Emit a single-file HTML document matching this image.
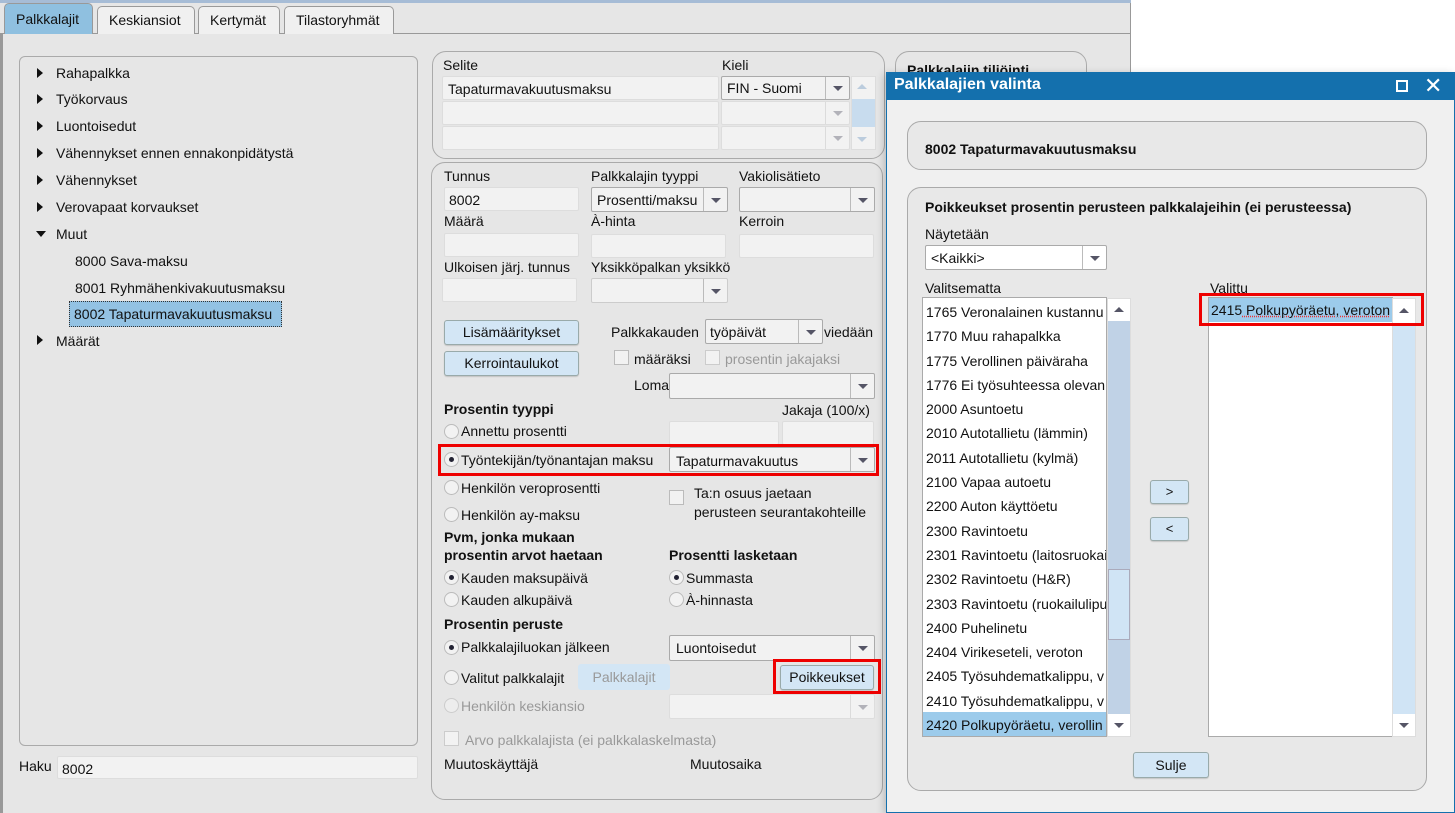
<!DOCTYPE html>
<html><head><meta charset="utf-8"><style>
*{box-sizing:border-box;margin:0;padding:0}
body{width:1455px;height:813px;overflow:hidden;background:#fff;font-family:"Liberation Sans",Arial,sans-serif;font-size:14px;color:#111;position:relative}
.a{position:absolute}
.t{position:absolute;white-space:nowrap}
.b{font-weight:bold}
.inp{position:absolute;background:#f2f2f2;border:1px solid #ddd;border-radius:2px}
.sel{position:absolute;background:#f2f2f2;border:1px solid #aaa;border-radius:2px}
.sel .ar{position:absolute;right:0;top:0;bottom:0;width:24px;border-left:1px solid #bbb}
.ar::after{content:"";position:absolute;left:7px;top:50%;margin-top:-2px;border-left:5px solid transparent;border-right:5px solid transparent;border-top:5px solid #556}
.btn{position:absolute;background:#d3e6f5;border:1px solid #9aa;border-radius:3px;text-align:center;box-shadow:0 1px 1px rgba(0,0,0,.15)}
.rad{position:absolute;width:15px;height:15px;border-radius:50%;background:#f2f2f2;border:1px solid #bbb}
.rad.on::after{content:"";position:absolute;left:4px;top:4px;width:5px;height:5px;border-radius:50%;background:#223}
.chk{position:absolute;width:15px;height:15px;background:#f2f2f2;border:1px solid #bbb}
.tri{position:absolute;border-top:5px solid transparent;border-bottom:5px solid transparent;border-left:6px solid #111}
.trd{position:absolute;border-left:5px solid transparent;border-right:5px solid transparent;border-top:6px solid #111}
.grp{position:absolute;border:1px solid #aaa;border-radius:14px}
.red{position:absolute;border:3px solid #e00}
.gray{color:#999}
</style></head><body>
<div class="a" style="left:0;top:0;width:1131px;height:813px;background:#e6e6e6;border-right:1px solid #999"></div>
<div class="a" style="left:0;top:0;width:1131px;height:3px;background:#a6bcd6"></div>
<div class="a" style="left:0;top:33px;width:1131px;height:1px;background:#999"></div>
<div class="a" style="left:0;top:33px;width:3px;height:780px;background:#999"></div>
<div class="a" style="left:4px;top:3px;width:89px;height:31px;background:#8fc0e0;border:1px solid #999;border-bottom:none;border-radius:5px 5px 0 0"></div>
<div class="t" style="left:16px;top:11px">Palkkalajit</div>
<div class="a" style="left:97px;top:6px;width:98px;height:28px;background:#f0f0f0;border:1px solid #999;border-bottom:none;border-radius:5px 5px 0 0"></div>
<div class="t" style="left:109px;top:12px">Keskiansiot</div>
<div class="a" style="left:198px;top:6px;width:82px;height:28px;background:#f0f0f0;border:1px solid #999;border-bottom:none;border-radius:5px 5px 0 0"></div>
<div class="t" style="left:210px;top:12px">Kertymät</div>
<div class="a" style="left:284px;top:6px;width:110px;height:28px;background:#f0f0f0;border:1px solid #999;border-bottom:none;border-radius:5px 5px 0 0"></div>
<div class="t" style="left:296px;top:12px">Tilastoryhmät</div>
<div class="grp" style="left:19px;top:56px;width:399px;height:690px;border-radius:6px"></div>
<div class="tri" style="left:37px;top:68px"></div><div class="t" style="left:56px;top:65px">Rahapalkka</div>
<div class="tri" style="left:37px;top:94px"></div><div class="t" style="left:56px;top:91px">Työkorvaus</div>
<div class="tri" style="left:37px;top:121px"></div><div class="t" style="left:56px;top:118px">Luontoisedut</div>
<div class="tri" style="left:37px;top:148px"></div><div class="t" style="left:56px;top:145px">Vähennykset ennen ennakonpidätystä</div>
<div class="tri" style="left:37px;top:175px"></div><div class="t" style="left:56px;top:172px">Vähennykset</div>
<div class="tri" style="left:37px;top:202px"></div><div class="t" style="left:56px;top:199px">Verovapaat korvaukset</div>
<div class="trd" style="left:36px;top:231px"></div><div class="t" style="left:56px;top:226px">Muut</div>
<div class="t" style="left:75px;top:253px">8000 Sava-maksu</div>
<div class="t" style="left:75px;top:280px">8001 Ryhmähenkivakuutusmaksu</div>
<div class="a" style="left:69px;top:301px;width:213px;height:26px;background:#93c2e3;border:1px dotted #333"></div>
<div class="t" style="left:74px;top:306px">8002 Tapaturmavakuutusmaksu</div>
<div class="tri" style="left:37px;top:335px"></div><div class="t" style="left:56px;top:333px">Määrät</div>
<div class="t" style="left:19px;top:758px">Haku</div>
<div class="inp" style="left:57px;top:756px;width:361px;height:23px"></div>
<div class="t" style="left:62px;top:761px">8002</div>
<div class="grp" style="left:432px;top:51px;width:453px;height:108px"></div>
<div class="t" style="left:443px;top:57px">Selite</div>
<div class="t" style="left:722px;top:57px">Kieli</div>
<div class="inp" style="left:442px;top:76px;width:277px;height:24px"></div>
<div class="t" style="left:448px;top:81px">Tapaturmavakuutusmaksu</div>
<div class="inp" style="left:442px;top:101px;width:277px;height:24px"></div>
<div class="inp" style="left:442px;top:126px;width:277px;height:24px"></div>
<div class="sel" style="left:721px;top:76px;width:129px;height:24px"><div class="ar"></div></div>
<div class="t" style="left:727px;top:80px">FIN - Suomi</div>
<div class="sel" style="left:721px;top:101px;width:129px;height:24px;border-color:#ddd"><div class="ar" style="opacity:.4"></div></div>
<div class="sel" style="left:721px;top:126px;width:129px;height:24px;border-color:#ddd"><div class="ar" style="opacity:.4"></div></div>
<div class="a" style="left:851px;top:76px;width:25px;height:74px;background:#f2f2f2;border:1px solid #ddd"></div>
<div class="a" style="left:852px;top:99px;width:23px;height:28px;background:#c8dcee"></div>
<div class="a" style="left:857px;top:84px;border-left:5px solid transparent;border-right:5px solid transparent;border-bottom:5px solid #bcd"></div>
<div class="a" style="left:857px;top:137px;border-left:5px solid transparent;border-right:5px solid transparent;border-top:5px solid #bcd"></div>
<div class="grp" style="left:431px;top:162px;width:452px;height:638px"></div>
<div class="t" style="left:444px;top:168px">Tunnus</div>
<div class="t" style="left:591px;top:168px">Palkkalajin tyyppi</div>
<div class="t" style="left:739px;top:168px">Vakiolisätieto</div>
<div class="inp" style="left:444px;top:187px;width:135px;height:24px"></div>
<div class="t" style="left:449px;top:192px">8002</div>
<div class="sel" style="left:591px;top:187px;width:137px;height:25px"><div class="ar"></div></div>
<div class="t" style="left:597px;top:192px">Prosentti/maksu</div>
<div class="sel" style="left:739px;top:187px;width:136px;height:25px"><div class="ar"></div></div>
<div class="t" style="left:444px;top:213px">Määrä</div>
<div class="t" style="left:591px;top:213px">À-hinta</div>
<div class="t" style="left:739px;top:213px">Kerroin</div>
<div class="inp" style="left:444px;top:233px;width:135px;height:24px"></div>
<div class="inp" style="left:591px;top:234px;width:135px;height:24px"></div>
<div class="inp" style="left:739px;top:234px;width:135px;height:24px"></div>
<div class="t" style="left:444px;top:259px">Ulkoisen järj. tunnus</div>
<div class="t" style="left:591px;top:259px">Yksikköpalkan yksikkö</div>
<div class="inp" style="left:442px;top:278px;width:135px;height:24px"></div>
<div class="sel" style="left:591px;top:278px;width:137px;height:25px;border-color:#ccc"><div class="ar"></div></div>
<div class="btn" style="left:444px;top:320px;width:135px;height:25px;line-height:23px">Lisämääritykset</div>
<div class="btn" style="left:444px;top:351px;width:135px;height:25px;line-height:23px">Kerrointaulukot</div>
<div class="t" style="left:611px;top:324px">Palkkakauden</div>
<div class="sel" style="left:705px;top:319px;width:118px;height:25px"><div class="ar"></div></div>
<div class="t" style="left:710px;top:324px">työpäivät</div>
<div class="t" style="left:824px;top:324px">viedään</div>
<div class="chk" style="left:614px;top:350px"></div><div class="t" style="left:634px;top:351px">määräksi</div>
<div class="chk" style="left:705px;top:350px;border-color:#ccc"></div><div class="t gray" style="left:725px;top:351px">prosentin jakajaksi</div>
<div class="t" style="left:634px;top:377px">Loma</div>
<div class="sel" style="left:669px;top:373px;width:206px;height:26px"><div class="ar"></div></div>
<div class="t b" style="left:444px;top:401px">Prosentin tyyppi</div>
<div class="t" style="left:782px;top:402px">Jakaja (100/x)</div>
<div class="rad" style="left:444px;top:424px"></div><div class="t" style="left:461px;top:423px">Annettu prosentti</div>
<div class="inp" style="left:669px;top:421px;width:110px;height:24px"></div>
<div class="inp" style="left:782px;top:421px;width:92px;height:24px"></div>
<div class="rad on" style="left:444px;top:452px"></div><div class="t" style="left:461px;top:452px">Työntekijän/työnantajan maksu</div>
<div class="sel" style="left:669px;top:447px;width:206px;height:25px"><div class="ar"></div></div>
<div class="t" style="left:676px;top:453px">Tapaturmavakuutus</div>
<div class="red" style="left:438px;top:444px;width:441px;height:32px"></div>
<div class="rad" style="left:444px;top:480px"></div><div class="t" style="left:461px;top:480px">Henkilön veroprosentti</div>
<div class="chk" style="left:669px;top:490px"></div>
<div class="t" style="left:694px;top:484px;line-height:19px">Ta:n osuus jaetaan<br>perusteen seurantakohteille</div>
<div class="rad" style="left:444px;top:507px"></div><div class="t" style="left:461px;top:507px">Henkilön ay-maksu</div>
<div class="t b" style="left:444px;top:528px;line-height:18px">Pvm, jonka mukaan<br>prosentin arvot haetaan</div>
<div class="t b" style="left:669px;top:547px">Prosentti lasketaan</div>
<div class="rad on" style="left:444px;top:570px"></div><div class="t" style="left:461px;top:570px">Kauden maksupäivä</div>
<div class="rad on" style="left:669px;top:570px"></div><div class="t" style="left:686px;top:570px">Summasta</div>
<div class="rad" style="left:444px;top:592px"></div><div class="t" style="left:461px;top:592px">Kauden alkupäivä</div>
<div class="rad" style="left:669px;top:592px"></div><div class="t" style="left:686px;top:592px">À-hinnasta</div>
<div class="t b" style="left:444px;top:616px">Prosentin peruste</div>
<div class="rad on" style="left:444px;top:640px"></div><div class="t" style="left:461px;top:639px">Palkkalajiluokan jälkeen</div>
<div class="sel" style="left:669px;top:635px;width:206px;height:26px"><div class="ar"></div></div>
<div class="t" style="left:676px;top:640px">Luontoisedut</div>
<div class="rad" style="left:444px;top:670px"></div><div class="t" style="left:461px;top:670px">Valitut palkkalajit</div>
<div class="btn" style="left:578px;top:664px;width:92px;height:26px;line-height:24px;color:#999;border-color:#d3e6f5;box-shadow:none">Palkkalajit</div>
<div class="btn" style="left:780px;top:665px;width:94px;height:25px;line-height:23px">Poikkeukset</div>
<div class="red" style="left:773px;top:659px;width:108px;height:35px"></div>
<div class="rad" style="left:444px;top:698px;opacity:.6"></div><div class="t gray" style="left:461px;top:698px">Henkilön keskiansio</div>
<div class="sel" style="left:669px;top:694px;width:206px;height:25px;border-color:#ddd"><div class="ar" style="opacity:.4"></div></div>
<div class="chk" style="left:444px;top:731px;border-color:#ccc"></div><div class="t gray" style="left:465px;top:732px">Arvo palkkalajista (ei palkkalaskelmasta)</div>
<div class="t" style="left:444px;top:756px">Muutoskäyttäjä</div>
<div class="t" style="left:690px;top:756px">Muutosaika</div>
<div class="grp" style="left:895px;top:51px;width:192px;height:40px"></div>
<div class="t b" style="left:907px;top:62px">Palkkalajin tiliöinti</div>
<div class="a" style="left:886px;top:72px;width:569px;height:741px;background:#f0f0f0;border:1px solid #1470ad;box-shadow:-2px 2px 8px rgba(0,0,0,.2)"></div>
<div class="a" style="left:886px;top:72px;width:569px;height:28px;background:#1470ad;border-radius:4px 4px 0 0"></div>
<div class="t b" style="left:894px;top:76px;color:#fff;font-size:16px">Palkkalajien valinta</div>
<div class="a" style="left:1396px;top:80px;width:12px;height:12px;border:2px solid #fff"></div>
<div class="t" style="left:1424px;top:73px;color:#fff;font-size:22px;line-height:26px">✕</div>
<div class="grp" style="left:907px;top:121px;width:520px;height:49px;background:#e8e8e8"></div>
<div class="t b" style="left:925px;top:141px">8002 Tapaturmavakuutusmaksu</div>
<div class="grp" style="left:907px;top:187px;width:520px;height:604px;background:#e8e8e8"></div>
<div class="t b" style="left:925px;top:199px">Poikkeukset prosentin perusteen palkkalajeihin (ei perusteessa)</div>
<div class="t" style="left:925px;top:226px">Näytetään</div>
<div class="sel" style="left:925px;top:245px;width:182px;height:25px;background:#fff"><div class="ar"></div></div>
<div class="t" style="left:931px;top:250px">&lt;Kaikki&gt;</div>
<div class="t" style="left:925px;top:280px">Valitsematta</div>
<div class="t" style="left:1210px;top:280px">Valittu</div>
<div class="a" style="left:922px;top:297px;width:185px;height:440px;background:#fff;border:1px solid #aaa;overflow:hidden">
<div style="position:absolute;left:0;top:414px;width:184px;height:24px;background:#9ccbeb"></div>
<div style="position:absolute;left:3px;top:2px;line-height:24.3px;white-space:nowrap">1765 Veronalainen kustannu<br>1770 Muu rahapalkka<br>1775 Verollinen päiväraha<br>1776 Ei työsuhteessa olevan<br>2000 Asuntoetu<br>2010 Autotallietu (lämmin)<br>2011 Autotallietu (kylmä)<br>2100 Vapaa autoetu<br>2200 Auton käyttöetu<br>2300 Ravintoetu<br>2301 Ravintoetu (laitosruokai<br>2302 Ravintoetu (H&amp;R)<br>2303 Ravintoetu (ruokailulipu<br>2400 Puhelinetu<br>2404 Virikeseteli, veroton<br>2405 Työsuhdematkalippu, v<br>2410 Työsuhdematkalippu, v<br>2420 Polkupyöräetu, verollin</div></div>
<div class="a" style="left:1107px;top:298px;width:24px;height:439px;background:#c0d2e6;border:1px solid #ddd"></div>
<div class="a" style="left:1108px;top:569px;width:22px;height:71px;background:#d0e4f5;border:1px solid #aab"></div>
<div class="a" style="left:1108px;top:299px;width:22px;height:22px;background:#fff"><div class="a" style="left:6px;top:8px;border-left:5px solid transparent;border-right:5px solid transparent;border-bottom:5px solid #556"></div></div>
<div class="a" style="left:1108px;top:714px;width:22px;height:22px;background:#fff"><div class="ar" style="position:absolute;left:-1px;top:0;width:22px;height:22px"></div></div>
<div class="btn" style="left:1150px;top:480px;width:39px;height:24px;line-height:22px;font-size:13px">&gt;</div>
<div class="btn" style="left:1150px;top:517px;width:39px;height:24px;line-height:22px;font-size:13px">&lt;</div>
<div class="a" style="left:1208px;top:297px;width:185px;height:440px;background:#fff;border:1px solid #aaa"></div>
<div class="a" style="left:1209px;top:298px;width:183px;height:24px;background:#9ccbeb;overflow:hidden"><div class="t" style="left:2px;top:4px">2415<span style="text-decoration:underline dotted #e33"> Polkupyöräetu, veroton</span></div></div>
<div class="a" style="left:1392px;top:298px;width:24px;height:439px;background:#d0e4f5;border:1px solid #ddd"></div>
<div class="a" style="left:1393px;top:299px;width:22px;height:24px;background:#fff"><div class="a" style="left:6px;top:9px;border-left:5px solid transparent;border-right:5px solid transparent;border-bottom:5px solid #556"></div></div>
<div class="a" style="left:1393px;top:714px;width:22px;height:22px;background:#fff"><div class="ar" style="position:absolute;left:-1px;top:0;width:22px;height:22px"></div></div>
<div class="red" style="left:1199px;top:293px;width:225px;height:33px"></div>
<div class="btn" style="left:1133px;top:752px;width:76px;height:26px;line-height:24px">Sulje</div>
</body></html>
